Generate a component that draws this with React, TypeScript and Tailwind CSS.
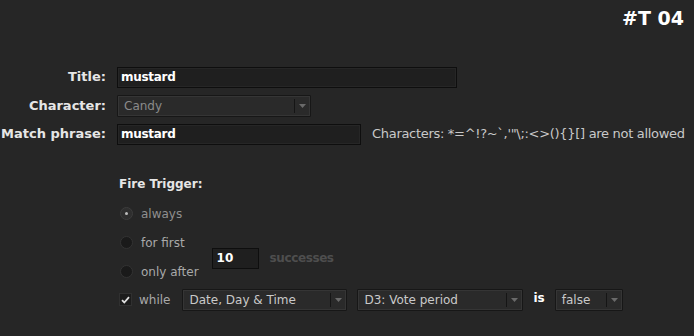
import { ReactNode } from 'react';

const FONT = { fontFamily: '"DejaVu Sans", Verdana, sans-serif' };

const Arrow = () => (
  <svg width="7" height="4" viewBox="0 0 7 4" className="block">
    <path d="M0 0h7L3.5 4z" fill="#6a6a6a" />
  </svg>
);

const Select = ({ value, width, dim }: { value: string; width: string; dim?: boolean }) => (
  <div
    className={`${width} h-[22px] flex items-center border border-[#171717] bg-[#2a2a2a] shadow-[inset_0_0_0_1px_#353535] rounded-[1px]`}
  >
    <span className={`flex-1 pl-[6px] text-[12px] leading-none ${dim ? 'text-[#8a8a8a]' : 'text-[#c9c9c9]'}`}>{value}</span>
    <div className="w-px h-[14px] bg-[#151515]" />
    <div className="w-[15px] flex justify-center">
      <Arrow />
    </div>
  </div>
);

const TextInput = ({ value, width }: { value: string; width: string }) => (
  <div className={`${width} shrink-0 h-[21px] flex items-center bg-[#1f1f1f] border border-[#0e0e0e] shadow-[inset_0_0_0_1px_#262626]`}>
    <span className="pl-[3px] text-[12px] font-bold text-white leading-none tracking-[-0.3px]">{value}</span>
  </div>
);

const Row = ({ label, children }: { label: string; children: ReactNode }) => (
  <div className="flex items-center">
    <div className="w-[106px] shrink-0 text-right text-[13px] font-bold text-[#e6e6e6] whitespace-nowrap">{label}</div>
    <div className="ml-[11px] flex items-center">{children}</div>
  </div>
);

const Radio = ({ checked, label }: { checked?: boolean; label: string }) => (
  <div className="flex items-center h-[20px]">
    <div
      className={`w-[13px] h-[13px] rounded-full flex items-center justify-center ${
        checked ? 'bg-[#2e2e2e] border border-[#3c3c3c]' : 'bg-[#1a1a1a] border border-[#333333]'
      }`}
    >
      {checked && <div className="w-[3px] h-[3px] rounded-full bg-[#bdbdbd]" />}
    </div>
    <span className={`ml-[8px] text-[12px] ${checked ? 'text-[#8f8f8f]' : 'text-[#a9a9a9]'}`}>{label}</span>
  </div>
);

export default function App() {
  return (
    <div className="w-[694px] h-[336px] bg-[#262626] overflow-hidden" style={FONT}>
      {/* Header */}
      <div className="flex justify-end pr-[10px] pt-[4px]">
        <span className="text-[19px] font-bold text-white">#T 04</span>
      </div>

      {/* Main fields */}
      <div className="mt-[34px] flex flex-col gap-[7px]">
        <Row label="Title:">
          <TextInput value="mustard" width="w-[340px]" />
        </Row>
        <Row label="Character:">
          <Select value="Candy" width="w-[194px]" dim />
        </Row>
        <Row label="Match phrase:">
          <TextInput value="mustard" width="w-[244px]" />
          <span className="ml-[11px] text-[13px] text-[#c9c9c9] whitespace-nowrap tracking-[-0.3px]">
            {'Characters: *=^!?~`,\'"\\;:<>(){}[] are not allowed'}
          </span>
        </Row>
      </div>

      {/* Fire trigger */}
      <div className="ml-[119px] mt-[30px]">
        <div className="text-[12px] font-bold text-[#e6e6e6]">Fire Trigger:</div>
        <div className="mt-[11px] ml-[1px]">
          <Radio checked label="always" />
          <div className="flex items-center mt-[9px]">
            <div className="flex flex-col gap-[9px]">
              <Radio label="for first" />
              <Radio label="only after" />
            </div>
            <div className="ml-[13px] mt-[2px] w-[47px] h-[21px] flex items-center bg-[#1f1f1f] border border-[#0e0e0e]">
              <span className="pl-[4px] text-[12px] font-bold text-white leading-none">10</span>
            </div>
            <span className="ml-[11px] mt-[2px] text-[12px] font-bold text-[#4e4e4e] tracking-[-0.4px]">successes</span>
          </div>
          <div className="flex items-center mt-[7px] -ml-[1px]">
            <div className="w-[13px] h-[13px] bg-[#1c1c1c] border border-[#303030] flex items-center justify-center">
              <svg width="9" height="8" viewBox="0 0 9 8">
                <path d="M1 4.2l2.3 2.3L8 1.2" stroke="#e0e0e0" strokeWidth="1.8" fill="none" />
              </svg>
            </div>
            <span className="ml-[7px] text-[12px] text-[#a9a9a9]">while</span>
            <div className="ml-[12px] flex items-center gap-[10px]">
              <Select value="Date, Day & Time" width="w-[165px]" />
              <Select value="D3: Vote period" width="w-[166px]" />
              <span className="text-[12px] font-bold text-white -mt-[4px]">is</span>
              <Select value="false" width="w-[68px]" />
            </div>
          </div>
        </div>
      </div>
    </div>
  );
}
